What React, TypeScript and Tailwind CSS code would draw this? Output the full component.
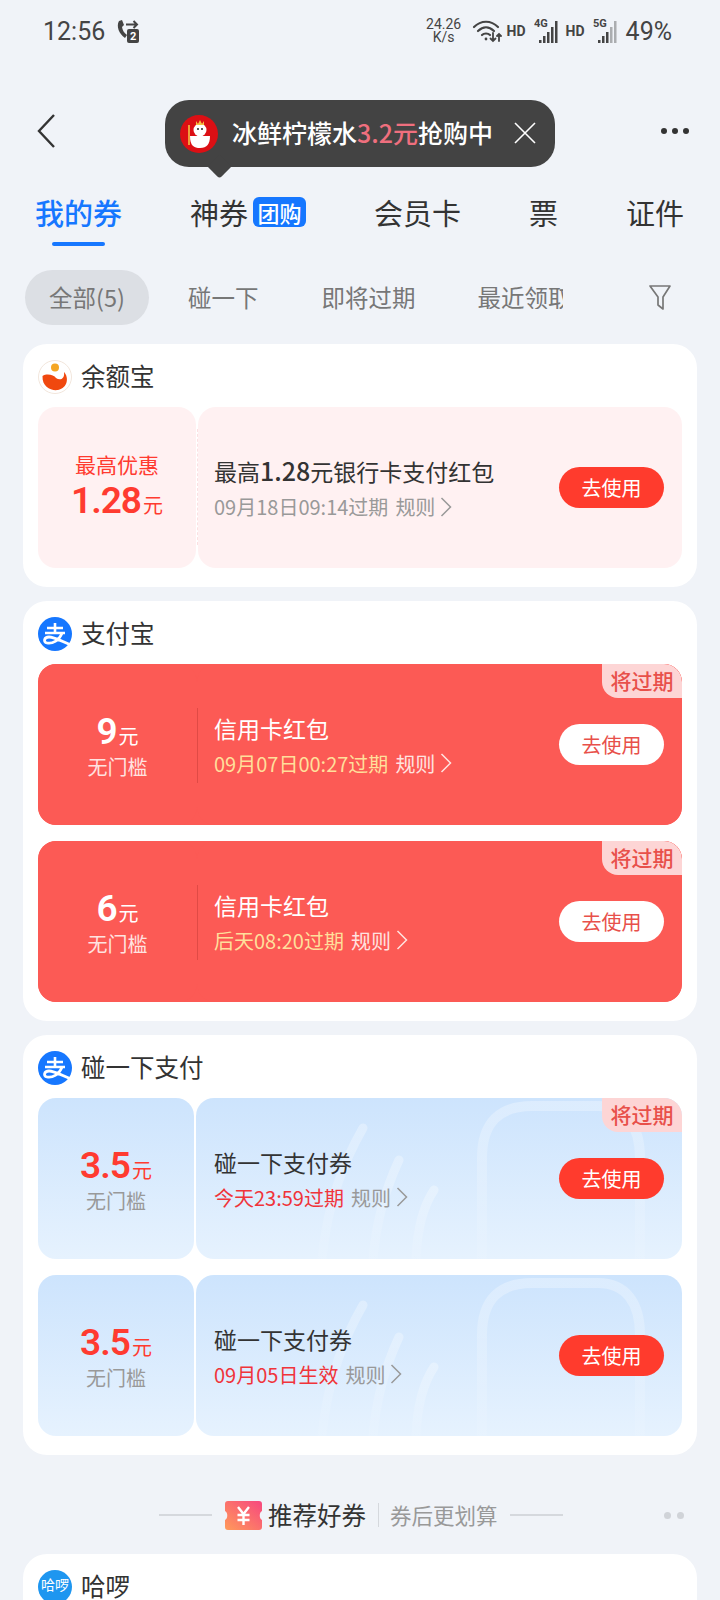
const CJK = "font-['Noto_Sans_CJK_SC','Noto_Sans',sans-serif]";

const Signal = ({ dim }: { dim?: boolean }) => (
  <svg width="24" height="26" viewBox="0 0 24 26" className="text-[#444]">
    <text x="0" y="9" fontSize="11" fontWeight="700" fontFamily="Roboto, sans-serif" fill="currentColor">
      {dim ? '5G' : '4G'}
    </text>
    <rect x="5" y="22" width="2.5" height="3" fill="currentColor" />
    <rect x="9" y="18" width="2.5" height="7" fill="currentColor" />
    <rect x="13" y="14" width="2.5" height="11" fill="currentColor" />
    <rect x="17" y="9" width="2.5" height="16" fill="currentColor" opacity={dim ? 0.4 : 1} />
    <rect x="21" y="3" width="2.5" height="22" fill="currentColor" opacity={dim ? 0.4 : 1} />
  </svg>
);

const CallIcon = () => (
  <div className="relative ml-[11px] h-[24px] w-[24px]">
    <svg width="24" height="24" viewBox="0 0 24 24" fill="none" className="absolute inset-0">
      <path d="M3 2 C0 7 3 15 9 19 L11 16 C8 14 6.5 11 6 8 L8 6 L6 1 Z" fill="#444" />
      <path d="M10 5.5 H21 M17.5 2 L21 5.5 L17.5 9" stroke="#444" strokeWidth="2" />
    </svg>
    <span className="absolute bottom-0 right-[1px] flex h-[14px] w-[12px] items-center justify-center rounded-[2px] bg-[#444] text-[11px] font-bold leading-none text-white">
      2
    </span>
  </div>
);

const StatusBar = () => (
  <div className="flex h-[60px] items-center pl-[43px] pr-[48px] pt-[2px] font-['Roboto',sans-serif] text-[#444]">
    <span className="text-[25px] leading-none">12:56</span>
    <CallIcon />
    <div className="ml-auto flex items-center">
      <div className="flex w-[36px] flex-col items-center text-[14px] leading-[13px]">
        <span>24.26</span>
        <span>K/s</span>
      </div>
      <svg width="30" height="24" viewBox="0 0 30 24" fill="none" stroke="#444" strokeWidth="2.2" strokeLinecap="round" className="ml-[10px]">
        <path d="M2 8 C9 1 19 1 26 8" />
        <path d="M6 12 C11 7 17 7 22 12" />
        <path d="M10 16 C12 14 16 14 18 16" />
        <circle cx="14" cy="20" r="1.4" fill="#444" stroke="none" />
        <path d="M21 14 V22 M18.5 19.5 L21 22 L23.5 19.5" strokeWidth="1.8" />
        <path d="M27 22 V15 M25 17 L27 15 L29 17" strokeWidth="1.8" />
      </svg>
      <span className="ml-[5px] text-[14px] font-bold">HD</span>
      <span className="ml-[8px]"><Signal /></span>
      <span className="ml-[8px] text-[14px] font-bold">HD</span>
      <span className="ml-[8px]"><Signal dim /></span>
      <span className="ml-[9px] text-[25px] leading-none">49%</span>
    </div>
  </div>
);

const PromoTip = () => (
  <div className={`absolute left-[165px] top-[100px] flex h-[67px] w-[390px] items-center rounded-[24px] bg-[#434343] pl-[15px] ${CJK}`}>
    <span className="absolute left-[46px] top-[58px] h-[17px] w-[17px] rotate-45 rounded-br-[3px] bg-[#434343]" />
    <svg width="38" height="38" viewBox="0 0 38 38" className="relative shrink-0">
      <circle cx="19" cy="19" r="19" fill="#dc0f14" />
      <path d="M10 21 C10 31 14 33 20 33 C27 33 30 29 30 21 Z" fill="#fff" />
      <circle cx="20" cy="15" r="6.5" fill="#fff" />
      <path d="M16 6 L18 9 L20 5 L22 9 L24 6 L24 10 H16 Z" fill="#f5c242" />
      <path d="M9 10 V30" stroke="#f5c242" strokeWidth="1.6" />
      <circle cx="18" cy="14" r="1" fill="#222" />
      <circle cx="22" cy="14" r="1" fill="#222" />
    </svg>
    <span className="relative -mt-[3px] ml-[14px] whitespace-nowrap text-[25px] font-medium leading-none text-white">
      冰鲜柠檬水<span className="text-[#ef6f7e]">3.2元</span>抢购中
    </span>
    <svg width="22" height="22" viewBox="0 0 22 22" stroke="#fff" strokeWidth="1.6" className="relative -mt-[2px] ml-[21px]">
      <path d="M1 1 L21 21 M21 1 L1 21" />
    </svg>
  </div>
);

const NavBar = () => (
  <div className="flex h-[132px] items-start justify-between pl-[36px] pr-[31px] pt-[54px]">
    <svg width="20" height="34" viewBox="0 0 20 34" fill="none" stroke="#333" strokeWidth="2.4">
      <path d="M18 1 L3 17 L18 33" />
    </svg>
    <div className="mt-[14px] flex gap-[5px]">
      <span className="h-[6px] w-[6px] rounded-full bg-[#333]" />
      <span className="h-[6px] w-[6px] rounded-full bg-[#333]" />
      <span className="h-[6px] w-[6px] rounded-full bg-[#333]" />
    </div>
  </div>
);

const Tabs = () => (
  <div className={`flex h-[58px] items-start gap-[68px] pl-[35px] text-[29px] leading-[40px] text-[#333] ${CJK}`}>
    <div className="relative font-medium text-[#1677ff]">
      我的券
      <span className="absolute left-[17px] top-[50px] h-[4px] w-[53px] rounded-full bg-[#1677ff]" />
    </div>
    <div className="flex items-center">
      神券
      <span className="ml-[5px] flex h-[30px] w-[53px] items-center justify-center rounded-[6px] bg-[#1677ff] text-[22px] font-medium leading-none text-white">
        团购
      </span>
    </div>
    <span>会员卡</span>
    <span>票</span>
    <span>证件</span>
  </div>
);

const Filters = () => (
  <div className={`mt-[20px] flex h-[55px] items-center pl-[25px] text-[23.5px] text-[#777] ${CJK}`}>
    <span className="flex h-[55px] w-[124px] items-center justify-center rounded-full bg-[#dcdfe4] leading-none">全部(5)</span>
    <span className="ml-[39px] leading-none">碰一下</span>
    <span className="ml-[63px] leading-none">即将过期</span>
    <span className="ml-[62px] w-[85px] overflow-hidden whitespace-nowrap leading-none">最近领取</span>
    <svg width="24" height="27" viewBox="0 0 24 27" fill="none" stroke="#777" strokeWidth="1.7" strokeLinejoin="round" className="ml-[85px]">
      <path d="M2 2 H22 L15 13 V25 L10 21 V13 Z" />
    </svg>
  </div>
);

const AlipayLogo = () => (
  <svg width="34" height="34" viewBox="0 0 34 34" fill="none" className="shrink-0">
    <circle cx="17" cy="17" r="17" fill="#1677ff" />
    <path d="M9 11 H25 M17 6 V15 M7 16 H27" stroke="#fff" strokeWidth="2.6" />
    <path d="M24 16 C21 24 14 27 9 26 C5 25 6 20 11 20 C16 20 23 24 33 28" stroke="#fff" strokeWidth="2.8" />
  </svg>
);

const YuebaoLogo = () => (
  <svg width="34" height="34" viewBox="0 0 34 34" className="shrink-0">
    <circle cx="17" cy="17" r="16.5" fill="#fff" stroke="#f2e6dc" />
    <circle cx="17" cy="7.5" r="4" fill="#f5a623" />
    <path d="M4.5 16 C4 27 13 31 20 30 C30 28 31 17 26 12 C27 19 22 21 18 18 C16 15 9 13 4.5 16 Z" fill="#f0480f" />
  </svg>
);

const HelloLogo = () => (
  <span className="flex h-[34px] w-[34px] shrink-0 items-center justify-center overflow-hidden rounded-full bg-[#1e96f0] pb-[6px] text-[14px] leading-none text-white">
    哈啰
  </span>
);

const Rule = ({ className }: { className: string }) => (
  <span className={`ml-[7px] flex items-center ${className}`}>
    规则
    <svg width="12" height="20" viewBox="0 0 12 20" fill="none" stroke="currentColor" strokeWidth="1.5" className="ml-[5px]">
      <path d="M1.5 1 L10.5 10 L1.5 19" />
    </svg>
  </span>
);

type Coupon = {
  tone: 'pink' | 'red' | 'blue';
  amount: string;
  caption: string;
  title: React.ReactNode;
  when: string;
  expiring?: boolean;
};

const tones = {
  pink: {
    leftWidth: 'w-[158px]',
    pad: 'ml-[2px] pl-[16px]',
    left: 'bg-[#fff1f2]',
    right: 'bg-[#fff1f2]',
    amount: 'text-[#ff3b30]',
    caption: 'text-[#999]',
    title: 'text-[#333]',
    when: 'text-[#999]',
    rule: 'text-[#999]',
    button: 'bg-[#ff3b2d] text-white',
  },
  red: {
    leftWidth: 'w-[159px]',
    pad: 'pl-[17px]',
    left: 'bg-[#fc5a55]',
    right: 'bg-[#fc5a55]',
    amount: 'text-white',
    caption: 'text-[#ffe3e0]',
    title: 'text-white',
    when: 'text-[#ffdf9b]',
    rule: 'text-[#ffe3e0]',
    button: 'bg-white text-[#e8504a]',
  },
  blue: {
    leftWidth: 'w-[156px]',
    pad: 'ml-[2px] pl-[18px]',
    left: 'bg-gradient-to-b from-[#cde4fd] to-[#e6f2fe]',
    right: 'bg-gradient-to-b from-[#cde4fd] to-[#e6f2fe]',
    amount: 'text-[#ff3b30]',
    caption: 'text-[#999]',
    title: 'text-[#333]',
    when: 'text-[#f0343a]',
    rule: 'text-[#999]',
    button: 'bg-[#ff3b2d] text-white',
  },
};

// phone and nfc waves behind the tap-to-pay coupons
const TapArt = () => (
  <svg width="486" height="161" viewBox="0 0 486 161" fill="none" className="absolute inset-0">
    <defs>
      <linearGradient id="tapFade" x1="0" y1="0" x2="0" y2="1">
        <stop offset="0" stopColor="#fff" stopOpacity="0.3" />
        <stop offset="1" stopColor="#fff" stopOpacity="0.06" />
      </linearGradient>
    </defs>
    <g stroke="url(#tapFade)" strokeLinecap="round">
      <path d="M286 161 V60 C286 24 304 8 336 8 H402 C430 8 444 28 444 60 V161" strokeWidth="10" />
      <path d="M343 38 H387" strokeWidth="12" />
      <path d="M167 30 C150 60 132 100 126 161" strokeWidth="9" />
      <path d="M203 62 C190 90 180 125 177 161" strokeWidth="9" />
      <path d="M238 92 C226 110 221 135 220 161" strokeWidth="9" />
    </g>
  </svg>
);

const CouponRow = ({ tone, amount, caption, title, when, expiring }: Coupon) => {
  const t = tones[tone];
  const top = tone === 'pink';
  return (
    <div className={`relative flex h-[161px] ${tone === 'red' ? 'overflow-hidden rounded-[18px] bg-[#fc5a55]' : ''}`}>
      <div className={`flex shrink-0 flex-col items-center justify-center rounded-[18px] ${t.leftWidth} ${t.left}`}>
        {top && <span className={`text-[21px] leading-[30px] ${t.amount}`}>{caption}</span>}
        <span className={`flex items-baseline leading-[44px] ${t.amount}`}>
          <span className="font-['Roboto',sans-serif] text-[37px] font-semibold tracking-[-1px]">{amount}</span>
          <span className="ml-[2px] text-[20px]">元</span>
        </span>
        {!top && <span className={`-mt-[3px] text-[20px] leading-[24px] ${t.caption}`}>{caption}</span>}
      </div>
      {top && <span className="absolute left-[159px] top-[22px] h-[116px] w-0 border-l border-dashed border-[#fbe0e2]" />}
      <div className={`relative flex flex-1 items-center overflow-hidden rounded-[18px] pr-[18px] ${t.pad} ${t.right}`}>
        {tone === 'blue' && <TapArt />}
        {tone === 'red' && <span className="absolute left-0 top-[44px] h-[75px] w-px bg-[#e04a45]" />}
        <div className="relative flex flex-col">
          <span className={`text-[23px] leading-[37px] ${t.title}`}>{title}</span>
          <span className="flex items-center text-[20px] leading-[33px]">
            <span className={t.when}>{when}</span>
            <Rule className={t.rule} />
          </span>
        </div>
        <span className={`relative ml-auto flex h-[41px] w-[105px] items-center justify-center rounded-full text-[20px] ${t.button}`}>
          去使用
        </span>
        {expiring && (
          <span className="absolute right-0 top-0 flex h-[34px] w-[80px] items-center justify-center rounded-bl-[16px] bg-[#fdd5d5] text-[21px] font-medium text-[#e8504a]">
            将过期
          </span>
        )}
      </div>
    </div>
  );
};

const Card = ({ logo, name, children }: { logo: React.ReactNode; name: string; children?: React.ReactNode }) => (
  <section className="mx-[23px] rounded-[24px] bg-white px-[15px] pb-[19px]">
    <div className="flex h-[63px] items-center gap-[9px] pt-[2px] text-[24.5px] text-[#333]">
      {logo}
      <span>{name}</span>
    </div>
    <div className="flex flex-col gap-[16px]">{children}</div>
  </section>
);

const Recommend = () => (
  <div className="relative mb-[21px] mt-[42px] flex h-[36px] items-center pl-[159px]">
    <span className="h-[2px] w-[53px] bg-[#d5d8dd]" />
    <svg width="37" height="29" viewBox="0 0 37 29" className="ml-[13px]">
      <defs>
        <linearGradient id="ticketFill" x1="0" y1="1" x2="1" y2="0">
          <stop offset="0" stopColor="#ff9a5a" />
          <stop offset="1" stopColor="#f7477f" />
        </linearGradient>
      </defs>
      <path d="M3 0 H34 C36 0 37 1 37 3 V10 C34 11 34 18 37 19 V26 C37 28 36 29 34 29 H3 C1 29 0 28 0 26 V19 C3 18 3 11 0 10 V3 C0 1 1 0 3 0 Z" fill="url(#ticketFill)" />
      <path d="M13 6 L18.5 13 L24 6 M18.5 13 V24 M12.5 14 H24.5 M12.5 19 H24.5" stroke="#fff" strokeWidth="2.4" fill="none" />
    </svg>
    <span className="ml-[6px] text-[24.5px] text-[#333]">推荐好券</span>
    <span className="ml-[12px] h-[24px] w-px bg-[#d5d8dd]" />
    <span className="ml-[11px] text-[21.5px] text-[#999]">券后更划算</span>
    <span className="ml-[12px] h-[2px] w-[53px] bg-[#d5d8dd]" />
    <span className="absolute left-[664px] h-[7px] w-[7px] rounded-full bg-[#d0d3d8]" />
    <span className="absolute left-[677px] h-[7px] w-[7px] rounded-full bg-[#d0d3d8]" />
  </div>
);

export default function App() {
  return (
    <div className={`relative h-[1600px] w-[720px] overflow-hidden bg-[#f0f3f8] ${CJK}`}>
      <StatusBar />
      <NavBar />
      <Tabs />
      <Filters />
      <PromoTip />

      <div className="mt-[19px] flex flex-col gap-[14px]">
        <Card logo={<YuebaoLogo />} name="余额宝">
          <CouponRow
            tone="pink"
            amount="1.28"
            caption="最高优惠"
            title={<>最高<span className="text-[25px] font-medium">1.28</span>元银行卡支付红包</>}
            when="09月18日09:14过期"
          />
        </Card>
        <Card logo={<AlipayLogo />} name="支付宝">
          <CouponRow tone="red" amount="9" caption="无门槛" title="信用卡红包" when="09月07日00:27过期" expiring />
          <CouponRow tone="red" amount="6" caption="无门槛" title="信用卡红包" when="后天08:20过期" expiring />
        </Card>
        <Card logo={<AlipayLogo />} name="碰一下支付">
          <CouponRow tone="blue" amount="3.5" caption="无门槛" title="碰一下支付券" when="今天23:59过期" expiring />
          <CouponRow tone="blue" amount="3.5" caption="无门槛" title="碰一下支付券" when="09月05日生效" />
        </Card>
      </div>

      <Recommend />
      <Card logo={<HelloLogo />} name="哈啰" />
    </div>
  );
}
